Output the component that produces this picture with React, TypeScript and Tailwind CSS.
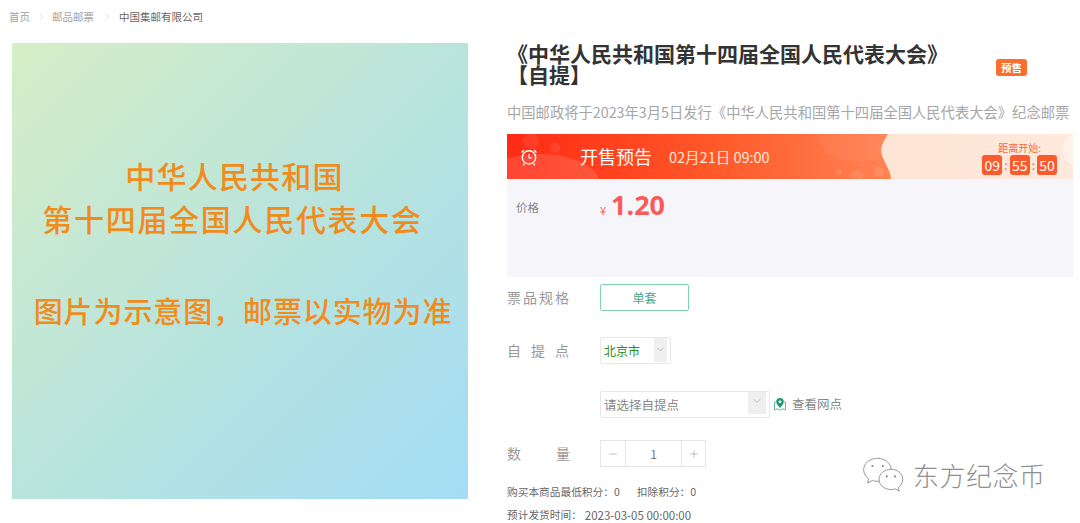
import { ChevronDown, ChevronRight, Minus, Plus } from "lucide-react";

const font = { fontFamily: '"Noto Sans CJK SC", "Liberation Sans", sans-serif' };

function Crumbs() {
  return (
    <div className="h-[33px] flex items-center pl-[9px] text-[10.5px] text-[#a3a3a3]">
      <span>首页</span>
      <ChevronRight className="w-[11px] h-[11px] ml-[6px] mr-[5px] text-[#bdbdbd]" strokeWidth={1.2} />
      <span>邮品邮票</span>
      <ChevronRight className="w-[11px] h-[11px] ml-[8px] mr-[6px] text-[#bdbdbd]" strokeWidth={1.2} />
      <span className="text-[#666]">中国集邮有限公司</span>
    </div>
  );
}

function Poster() {
  return (
    <div className="w-[456px] h-[456px] shrink-0 flex flex-col items-center pt-[113px] bg-gradient-to-br from-[#d6eec6] via-[#b9e4dc] to-[#a3dcf5] text-[#f08c1e] font-medium whitespace-nowrap">
      <div className="text-[30px] leading-[38px] tracking-[1.2px] -ml-[11px]">中华人民共和国</div>
      <div className="text-[30px] leading-[38px] tracking-[1.7px] mt-[5px] -ml-[15px]">第十四届全国人民代表大会</div>
      <div className="text-[29px] leading-[38px] tracking-[0.9px] mt-[54px] ml-[6px]">图片为示意图，邮票以实物为准</div>
    </div>
  );
}

function AlarmIcon() {
  return (
    <svg viewBox="0 0 24 24" className="w-[20px] h-[20px]" fill="none" stroke="white" strokeWidth="1.6">
      <circle cx="12" cy="12.5" r="8" />
      <path d="M12 8v5h3.500" strokeWidth="1.3" />
      <path d="M3 6.500 6 3.500M21 6.500l-3-3M6.500 20 5 22M17.500 20l1.500 2" />
    </svg>
  );
}

function TimeBox({ value }: { value: string }) {
  return (
    <span className="w-[20px] h-[20px] rounded-[3px] bg-[#fb5a2e] text-white text-[14px] leading-[20px] text-center">{value}</span>
  );
}

function Banner() {
  return (
    <div className="relative h-[45px] flex items-center bg-[#fde3d2] overflow-hidden">
      <svg className="absolute inset-0 w-full h-full" viewBox="0 0 566 45" preserveAspectRatio="none">
        <defs>
          <linearGradient id="sale" x1="0" x2="1" y1="0" y2="0">
            <stop offset="0" stopColor="#ff2a14" />
            <stop offset="0.55" stopColor="#ff5a2a" />
            <stop offset="1" stopColor="#ff8354" />
          </linearGradient>
          <linearGradient id="pale" x1="0" x2="1" y1="0" y2="0">
            <stop offset="0" stopColor="#fedcc6" />
            <stop offset="1" stopColor="#fee9dc" />
          </linearGradient>
        </defs>
        <rect width="566" height="45" fill="url(#pale)" />
        <path d="M0 0H381C375 10 372 15 376 24C380 33 384 39 384 45H0Z" fill="url(#sale)" />
        <ellipse cx="32" cy="48" rx="60" ry="28" fill="#ffffff" opacity="0.13" />
        <circle cx="24" cy="7" r="8" fill="#ffffff" opacity="0.07" />
        <circle cx="48" cy="14" r="5" fill="#ffffff" opacity="0.08" />
        <circle cx="350" cy="42" r="6" fill="#ffffff" opacity="0.09" />
        <circle cx="372" cy="38" r="5" fill="#ffffff" opacity="0.1" />
        <circle cx="332" cy="38" r="3" fill="#ffffff" opacity="0.09" />
        <ellipse cx="350" cy="4" rx="38" ry="24" fill="#ffffff" opacity="0.05" />
        <ellipse cx="566" cy="16" rx="10" ry="15" fill="#ffffff" opacity="0.4" />
      </svg>
      <div className="relative flex items-center w-full">
        <div className="ml-[12px] w-[20px]"><AlarmIcon /></div>
        <span className="ml-[41px] text-white text-[18px]">开售预告</span>
        <span className="ml-[17px] text-[#ffe6da] text-[14.5px]">02月21日 09:00</span>
        <div className="ml-auto mr-[16px] flex flex-col items-center">
          <span className="text-[#f9684a] text-[10px] leading-[14px] mt-[3px]">距离开始:</span>
          <div className="flex items-center gap-[2px] text-[#f9684a] text-[12px]">
            <TimeBox value="09" />
            <span>:</span>
            <TimeBox value="55" />
            <span>:</span>
            <TimeBox value="50" />
          </div>
        </div>
      </div>
    </div>
  );
}

function Details() {
  return (
    <div className="w-[566px] ml-[39px] shrink-0">
      <div className="flex items-start h-[50px]">
        <h1 className="w-[445px] text-[21px] leading-[21px] font-bold text-[#333]">
          <span className="block whitespace-nowrap">《中华人民共和国第十四届全国人民代表大会》</span>
          <span className="block">【自提】</span>
        </h1>
        <span className="ml-[44px] mt-[16px] w-[31px] h-[17px] rounded-[3px] bg-[#fb6d2d] text-white text-[10.5px] font-bold leading-[17px] text-center">预售</span>
      </div>
      <p className="mt-[9px] text-[14.3px] leading-[20px] text-[#a6a6a6] whitespace-nowrap">
        中国邮政将于2023年3月5日发行《中华人民共和国第十四届全国人民代表大会》纪念邮票
      </p>
      <div className="mt-[12px]"><Banner /></div>
      <div className="h-[98px] bg-[#f5f5fa] flex items-start">
        <span className="w-[93px] pl-[9px] mt-[20px] text-[11.5px] leading-[16px] text-[#888]">价格</span>
        <span className="mt-[24px] text-[11px] leading-[14px] text-[#ff5a5a]">¥</span>
        <span className="ml-[5px] mt-[9px] text-[27px] leading-[34px] font-bold text-[#fb5a5a]" style={{ fontFamily: '"Noto Sans", sans-serif' }}>1.20</span>
      </div>
      <div className="mt-[7px] flex items-center">
        <span className="w-[93px] text-[14px] tracking-[2px] text-[#999]">票品规格</span>
        <span className="w-[89px] h-[27px] border border-[#7ed3ac] rounded-[2px] text-[#4aa886] text-[12px] leading-[25px] text-center">单套</span>
      </div>
      <div className="mt-[26px] flex items-start">
        <span className="w-[93px] shrink-0 whitespace-nowrap text-[14px] leading-[27px] tracking-[10px] text-[#999]">自提点</span>
        <div className="w-[71px] h-[27px] border border-[#e8e8e8] rounded-[2px] flex items-start pl-[3px] text-[12px] leading-[25px] text-[#2f8a1f]">
          <span>北京市</span>
          <span className="ml-auto mr-[3px] w-[13px] h-[24px] bg-[#efefef] flex justify-center pt-[6px]">
            <ChevronDown className="w-[11px] h-[11px] text-[#999]" strokeWidth={1.2} />
          </span>
        </div>
      </div>
      <div className="mt-[27px] ml-[93px] flex items-center">
        <div className="w-[170px] h-[27px] border border-[#e8e8e8] rounded-[2px] flex items-start pl-[3px] text-[12.5px] leading-[25px] text-[#888]">
          <span>请选择自提点</span>
          <span className="ml-auto mr-[3px] w-[18px] h-[22px] bg-[#efefef] flex justify-center pt-[3px]">
            <ChevronDown className="w-[12px] h-[12px] text-[#999]" strokeWidth={1.2} />
          </span>
        </div>
        <svg viewBox="0 0 14 14" className="w-[14px] h-[14px] ml-[3px] -mt-[1px]" fill="none">
          <path d="M3 5H1.500V13L4 11.800 7 13 10 11.800 12.500 13V5H11" stroke="#4aa886" strokeWidth="0.8" />
          <path d="M7 1a3.800 3.800 0 0 1 3.800 3.800C10.800 7.500 7 11 7 11S3.200 7.500 3.200 4.800A3.800 3.800 0 0 1 7 1Z" fill="#1f9a6c" />
          <circle cx="7" cy="4.800" r="1.400" fill="white" />
        </svg>
        <span className="ml-[5px] text-[12.5px] text-[#888]">查看网点</span>
      </div>
      <div className="mt-[22px] flex items-center">
        <span className="w-[93px] shrink-0 whitespace-nowrap text-[14px] tracking-[35px] text-[#999]">数量</span>
        <div className="w-[106px] h-[27px] border border-[#e4e6ec] flex items-center text-[#999]">
          <span className="w-[25px] h-full flex items-center justify-center border-r border-[#e4e6ec]">
            <Minus className="w-[12px] h-[12px]" strokeWidth={1.2} />
          </span>
          <span className="flex-1 text-center text-[12px] text-[#777]">1</span>
          <span className="w-[24px] h-full flex items-center justify-center border-l border-[#e4e6ec]">
            <Plus className="w-[12px] h-[12px]" strokeWidth={1.2} />
          </span>
        </div>
      </div>
      <div className="mt-[17px] flex text-[10.7px] leading-[16px] text-[#666]">
        <span>购买本商品最低积分：0</span>
        <span className="ml-[17px]">扣除积分：0</span>
      </div>
      <div className="mt-[7px] flex text-[10.7px] leading-[16px] text-[#666]">
        <span>预计发货时间：</span>
        <span className="ml-[3px] text-[11.5px]">2023-03-05 00:00:00</span>
      </div>
    </div>
  );
}

function Watermark() {
  return (
    <div className="absolute left-[862px] top-[456px] flex items-center text-[#8f8f8f] [text-shadow:0_0_1px_#fff]">
      <svg viewBox="0 0 40 38" className="w-[44px] h-[42px]" fill="#ffffff" stroke="#8a8a8a" strokeWidth="0.8">
        <path d="M14 2C7 2 1.500 6.500 1.500 12.500c0 3.500 2 6.300 4.500 8.200L5 24.500l4.300-2.300c1.500.5 3 .7 4.700.7 7 0 12.500-4.500 12.500-10.400S21 2 14 2Z" />
        <circle cx="9.500" cy="9" r="1" fill="#8a8a8a" stroke="none" />
        <circle cx="19" cy="9" r="1" fill="#8a8a8a" stroke="none" />
        <path d="M26.500 12C20.500 12 15.500 16 15.500 21.200s5 9.200 11 9.200c1.300 0 2.600-.2 3.700-.6l3.700 2-.9-3.300c2.500-1.700 4-4.300 4-7.300C37 16 32.500 12 26.500 12Z" />
        <circle cx="22.500" cy="18.500" r="1" fill="#8a8a8a" stroke="none" />
        <circle cx="30" cy="18.500" r="1" fill="#8a8a8a" stroke="none" />
      </svg>
      <span className="ml-[7px] -mt-[4px] text-[26px] leading-[30px] font-light tracking-[0.5px]">东方纪念币</span>
    </div>
  );
}

export default function App() {
  return (
    <div className="relative w-[1080px] h-[523px] bg-white overflow-hidden" style={font}>
      <Crumbs />
      <div className="flex items-start pl-[12px] pt-[10px]">
        <Poster />
        <Details />
      </div>
      <Watermark />
    </div>
  );
}
